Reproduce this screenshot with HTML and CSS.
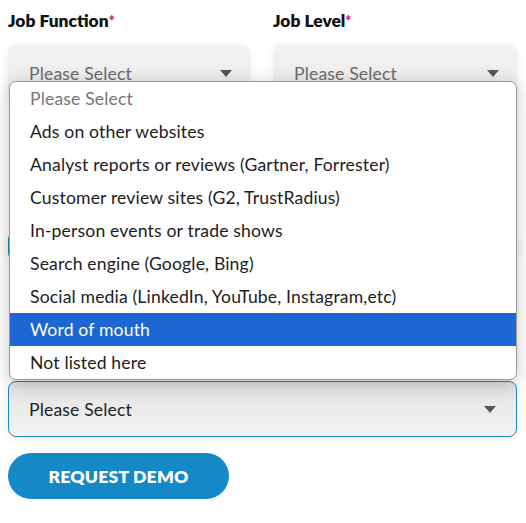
FILE: index.html
```html
<!DOCTYPE html>
<html>
<head>
<meta charset="utf-8">
<link rel="stylesheet" href="styles.css">
</head>
<body>
<form class="form">
  <div class="row two">
    <div class="field">
      <label class="label">Job Function<span class="req">*</span></label>
      <div class="select muted"><span>Please Select</span><i class="arrow"></i></div>
    </div>
    <div class="field">
      <label class="label">Job Level<span class="req">*</span></label>
      <div class="select muted"><span>Please Select</span><i class="arrow"></i></div>
    </div>
  </div>
  <div class="hidden-rows">
    <div class="select focus small"></div>
  </div>
  <div class="select focus"><span>Please Select</span><i class="arrow"></i></div>
  <button type="button" class="btn">REQUEST DEMO</button>

  <ul class="menu">
    <li class="opt placeholder">Please Select</li>
    <li class="opt">Ads on other websites</li>
    <li class="opt">Analyst reports or reviews (Gartner, Forrester)</li>
    <li class="opt">Customer review sites (G2, TrustRadius)</li>
    <li class="opt">In-person events or trade shows</li>
    <li class="opt">Search engine (Google, Bing)</li>
    <li class="opt">Social media (LinkedIn, YouTube, Instagram,etc)</li>
    <li class="opt active">Word of mouth</li>
    <li class="opt">Not listed here</li>
  </ul>
</form>
</body>
</html>
```
FILE: styles.css
```css
* { box-sizing: border-box; }
html, body { margin: 0; background: #fff; }
body {
  font-family: "Lato", "Liberation Sans", sans-serif;
  color: #222;
  padding: 10px 9px 0 8px;
}
.form { position: relative; }
.row.two {
  display: grid;
  grid-template-columns: 242px 244px;
  column-gap: 23px;
}
.field { display: flex; flex-direction: column; }
.label {
  font-weight: 800;
  font-size: 17.4px;
  line-height: 22px;
  color: #111;
  margin-bottom: 13px;
}
.req { color: #d0245e; font-size: 14px; vertical-align: top; }
.select {
  position: relative;
  height: 56px;
  border-radius: 8px;
  background: linear-gradient(#ececec, #f4f4f4);
  box-shadow: 0 2px 10px rgba(0,0,0,0.08);
  display: flex;
  align-items: center;
  padding-left: 21px;
  font-size: 17.6px;
  letter-spacing: 0.15px;
  color: #222;
}
.select.muted { color: #6b6b6b; background: linear-gradient(#f2f2f2, #eaeaea); }
.select.focus { border: 1px solid #1c86c3; background: linear-gradient(#e3e3e3, #f3f3f3); padding-left: 20px; }
.arrow {
  position: absolute;
  right: 18px;
  top: 50%;
  margin-top: -3px;
  width: 0; height: 0;
  border-left: 6px solid transparent;
  border-right: 6px solid transparent;
  border-top: 7px solid #555;
}
.select.focus .arrow { right: 20px; }
.hidden-rows { height: 280px; padding-top: 130px; }
.select.small { height: 30px; }
.btn {
  margin-top: 16px;
  width: 221px;
  height: 46px;
  border: none;
  border-radius: 23px;
  background: #1589c8;
  color: #fff;
  font-family: "Lato", "Liberation Sans", sans-serif;
  font-weight: 800;
  font-size: 17.6px;
  letter-spacing: 0.2px;
}
.menu {
  position: absolute;
  top: 71px;
  left: 1px;
  width: 508px;
  margin: 0;
  padding: 0;
  list-style: none;
  background: #fff;
  border: 1px solid #9a9a9a;
  border-radius: 7px;
  overflow: hidden;
  box-shadow: 0 4px 18px rgba(0,0,0,0.22);
}
.opt {
  height: 33px;
  line-height: 33px;
  padding-left: 20px;
  font-size: 17.6px;
  letter-spacing: 0.15px;
  color: #1d1d1d;
}
.opt.placeholder { color: #777; }
.opt.active { background: #1e66d2; color: #fff; }
```
